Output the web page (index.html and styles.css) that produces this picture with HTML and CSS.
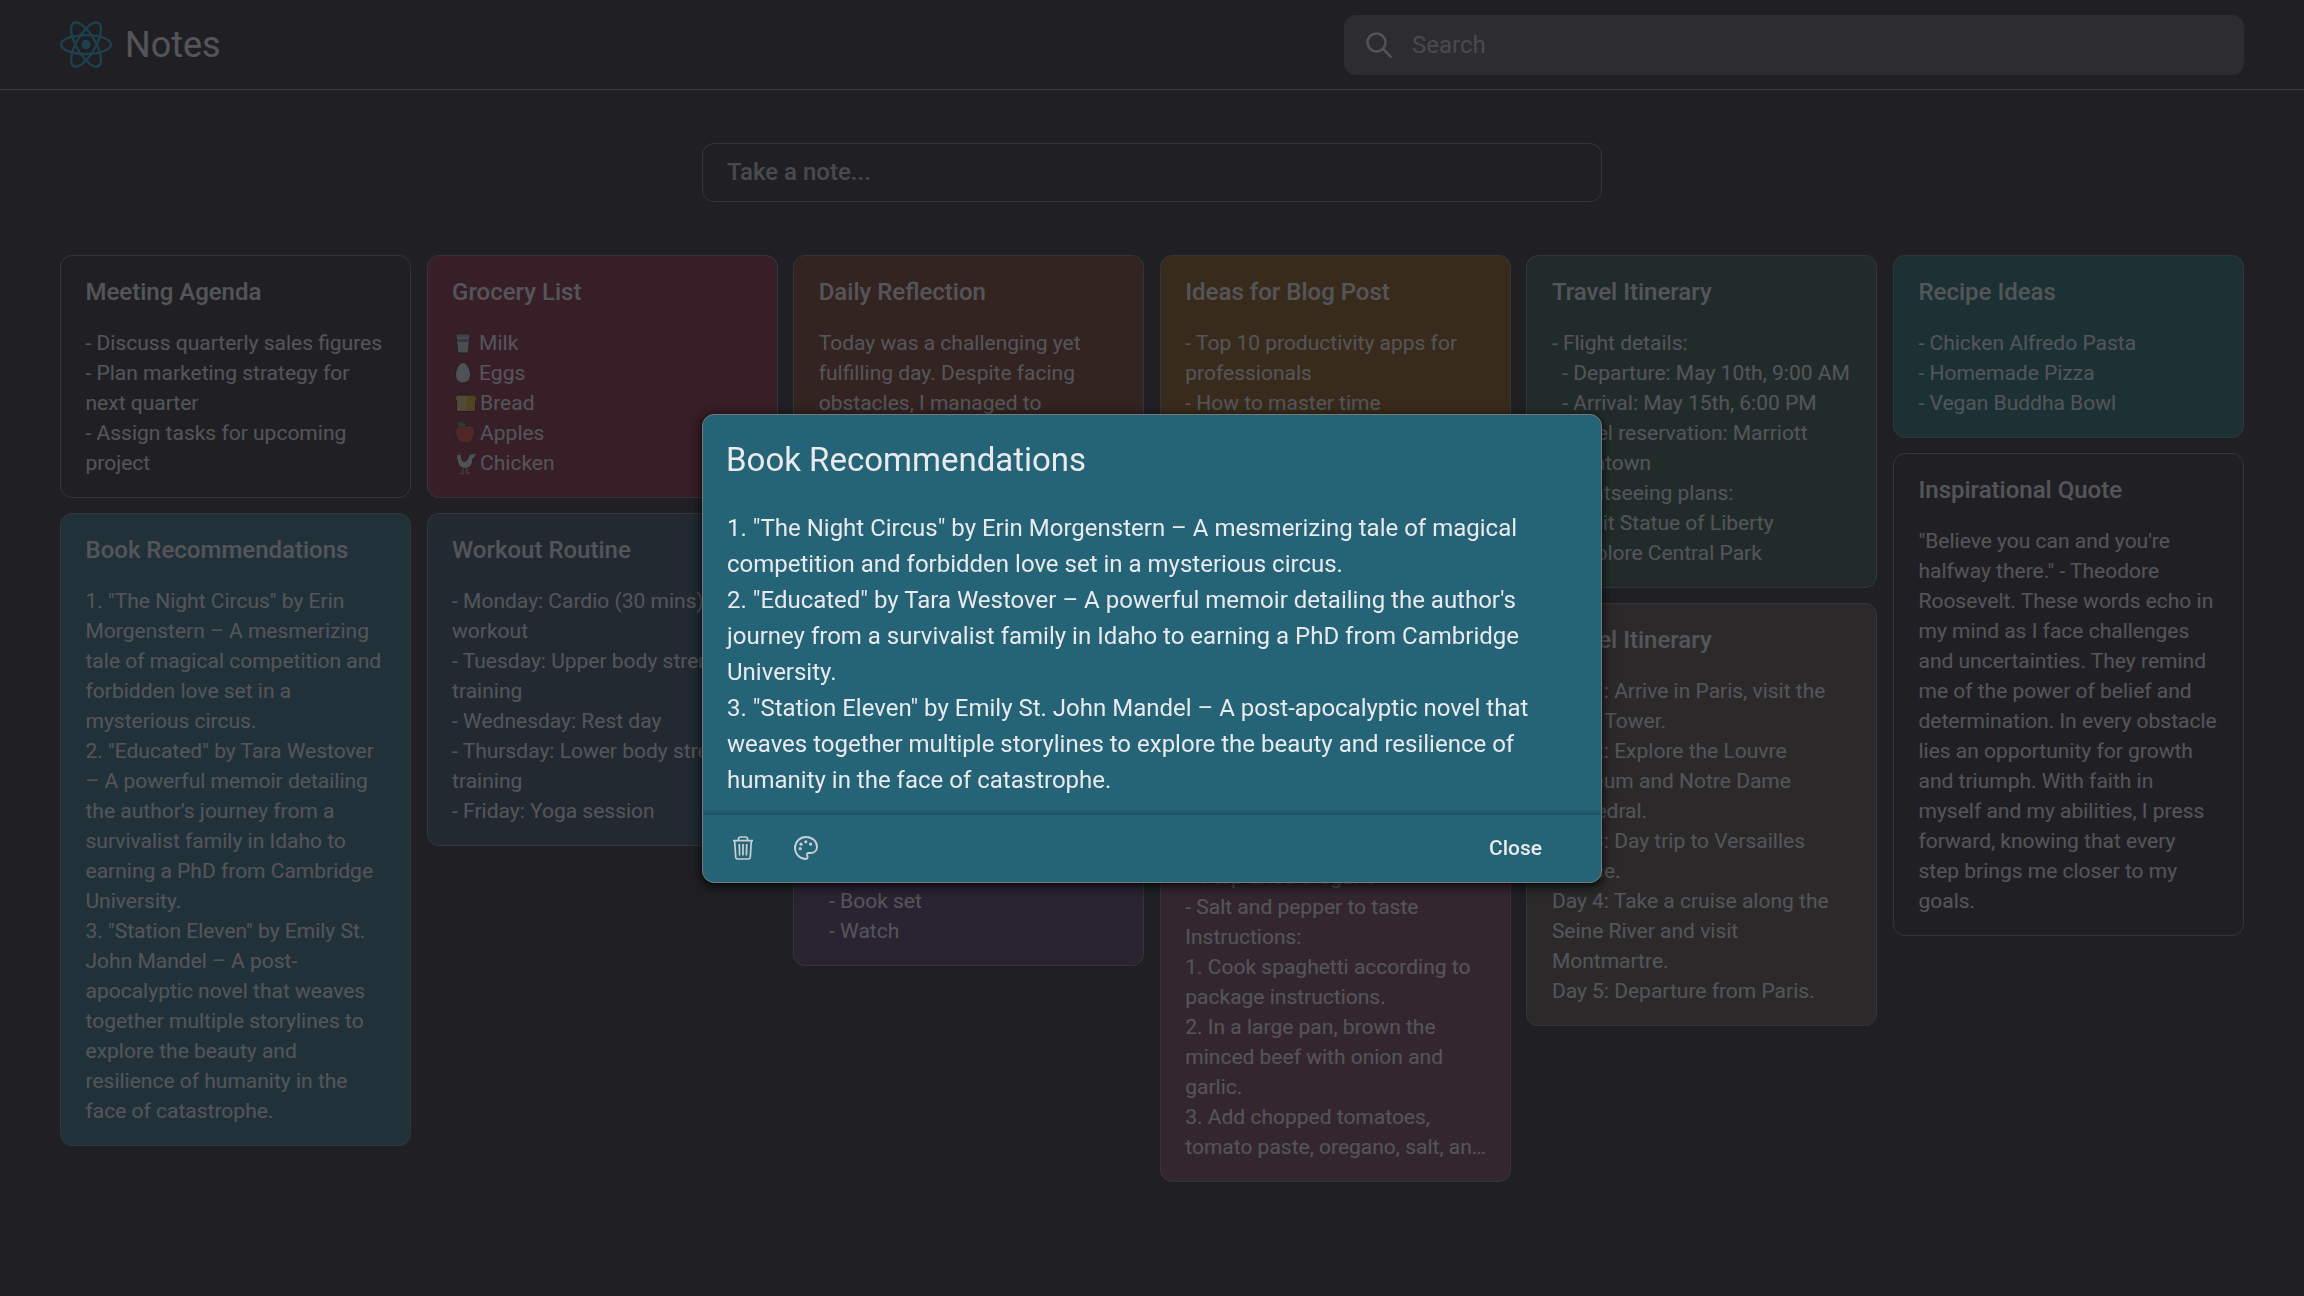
FILE: index.html
```html
<!DOCTYPE html>
<html lang="en">
<head>
<meta charset="utf-8">
<title>Notes</title>
<link rel="stylesheet" href="styles.css">
</head>
<body>
<header class="topbar">
  <div class="brand">
    <svg class="logo" viewBox="-11.5 -10.232 23 20.463"><circle r="2.05" fill="#149eca"/><g fill="none" stroke="#149eca"><ellipse rx="11" ry="4.2"/><ellipse rx="11" ry="4.2" transform="rotate(60)"/><ellipse rx="11" ry="4.2" transform="rotate(120)"/></g></svg>
    <h1 class="brand-name">Notes</h1>
  </div>
  <div class="search">
    <svg class="search-icon" viewBox="0 0 36 36" fill="none" stroke="currentColor" stroke-width="2.4"><circle cx="15.500" cy="15.500" r="9"/><path d="M22 22l8.500 8.500"/></svg>
    <span>Search</span>
  </div>
</header>
<main class="page">
  <div class="composer">Take a note...</div>
  <div class="board">
    <div class="column">
      <article class="note"><h2>Meeting Agenda</h2><p>- Discuss quarterly sales figures
- Plan marketing strategy for next quarter
- Assign tasks for upcoming project</p></article>
      <article class="note fog"><h2>Book Recommendations</h2><p>1. "The Night Circus" by Erin Morgenstern – A mesmerizing tale of magical competition and forbidden love set in a mysterious circus.
2. "Educated" by Tara Westover – A powerful memoir detailing the author's journey from a survivalist family in Idaho to earning a PhD from Cambridge University.
3. "Station Eleven" by Emily St. John Mandel – A post-apocalyptic novel that weaves together multiple storylines to explore the beauty and resilience of humanity in the face of catastrophe.</p></article>
    </div>
    <div class="column">
      <article class="note coral"><h2>Grocery List</h2><p><svg class="food narrow" viewBox="0 0 27 24"><path d="M4 3h14l-1.500 17q-.2 2-2 2h-7q-1.800 0-2-2z" fill="#c9cdd0" stroke="#222" stroke-width="1"/><path d="M5 8h12l-.3 3H5.300z" fill="#777d82"/><path d="M4.500 4h13l-.2 2.500H4.700z" fill="#9ba1a5"/></svg>Milk
<svg class="food narrow" viewBox="0 0 27 24"><path d="M11 1.500c4 0 7.500 7 7.500 12.500 0 5-3.500 8-7.500 8s-7.500-3-7.500-8C3.500 8.500 7 1.500 11 1.500z" fill="#d6dadc" stroke="#222" stroke-width="1"/></svg>Eggs
<svg class="food" viewBox="0 0 28 24"><path d="M5.500 4h16q3 0 3 3.500 0 2-1 3v8.500q0 1.500-1.500 1.500H6q-1.500 0-1.500-1.500v-9q-1-1-1-2.500Q3.500 4 5.500 4z" fill="#d9a514" stroke="#222" stroke-width="1"/><path d="M5.500 5h8q2 0 2 2.500 0 2-1 3v9H5.500V10q-1-1-1-2.500Q4.500 5 5.500 5z" fill="#e2c56e"/></svg>Bread
<svg class="food" viewBox="0 0 28 24"><path d="M13 5.500c4-2.500 10-1 10 5.500 0 5-4 11-7 11-1.500 0-2-.5-3-.5s-2 .5-3 .5c-3 0-6.500-6-6.500-11 0-6.500 5.500-8 9.500-5.500z" fill="#d63b26" stroke="#222" stroke-width="1"/><path d="M5 1.500c5-1.500 8 0 8.500 4-4.500 1-7.500 0-8.500-4z" fill="#2f9b3c"/></svg>Apples
<svg class="food" viewBox="0 0 28 24"><path d="M5 3l4 .5 1.500 6.500c3 1.500 5-1 6-4.500 1-3 5-3.500 8.500-2.500-2 1-2.500 2-2 4l-2.500 1c1 5-3 9.500-7.500 9.500-5 0-7.500-4-7.500-8.500L4.500 7z" fill="#d6dadc" stroke="#222" stroke-width="1"/><path d="M5.500 2.500q2-1.800 3.500.8M4.500 7.500l-1.500-1" fill="none" stroke="#c33" stroke-width="1.500"/><path d="M11 17.500v5H8M15 17l-.5 5h3" fill="none" stroke="#b08a3c" stroke-width="1.500"/></svg>Chicken</p></article>
      <article class="note storm"><h2>Workout Routine</h2><p>- Monday: Cardio (30 mins), abs workout
- Tuesday: Upper body strength training
- Wednesday: Rest day
- Thursday: Lower body strength training
- Friday: Yoga session</p></article>
    </div>
    <div class="column">
      <article class="note peach"><h2>Daily Reflection</h2><p>Today was a challenging yet fulfilling day. Despite facing obstacles, I managed to
complete my tasks on time.
I learned to stay patient
and to ask for help early.
Tomorrow I will begin with
the hardest item first.
I am grateful for my team
and for a quiet evening.</p></article>
      <article class="note dusk"><h2>Gift Ideas</h2><p>- Mom:
  - Scarf
  - Candles
- Dad:
  - Wallet
  - Book set
  - Watch</p></article>
    </div>
    <div class="column">
      <article class="note sand"><h2>Ideas for Blog Post</h2><p>- Top 10 productivity apps for professionals
- How to master time management
- Healthy habits</p></article>
      <article class="note blossom"><h2>Recipe: Classic Spaghetti Bolognese</h2><p>Ingredients:
- Spaghetti
- Minced beef
- 1 onion
- 2 cloves of garlic
- Chopped tomatoes
- Tomato paste
- Olive oil
- 1 tsp dried oregano
- Salt and pepper to taste
Instructions:
1. Cook spaghetti according to package instructions.
2. In a large pan, brown the minced beef with onion and garlic.
3. Add chopped tomatoes, <span class="last-line">tomato paste, oregano, salt, an…</span></p></article>
    </div>
    <div class="column">
      <article class="note mint"><h2>Travel Itinerary</h2><p>- Flight details:
  - Departure: May 10th, 9:00 AM
  - Arrival: May 15th, 6:00 PM
- Hotel reservation: Marriott Downtown
- Sightseeing plans:
  - Visit Statue of Liberty
  - Explore Central Park</p></article>
      <article class="note clay"><h2>Travel Itinerary</h2><p>Day 1: Arrive in Paris, visit the Eiffel Tower.
Day 2: Explore the Louvre Museum and Notre Dame Cathedral.
Day 3: Day trip to Versailles Palace.
Day 4: Take a cruise along the Seine River and visit Montmartre.
Day 5: Departure from Paris.</p></article>
    </div>
    <div class="column">
      <article class="note sage"><h2>Recipe Ideas</h2><p>- Chicken Alfredo Pasta
- Homemade Pizza
- Vegan Buddha Bowl</p></article>
      <article class="note"><h2>Inspirational Quote</h2><p>"Believe you can and you're halfway there." - Theodore Roosevelt. These words echo in my mind as I face challenges and uncertainties. They remind me of the power of belief and determination. In every obstacle lies an opportunity for growth and triumph. With faith in myself and my abilities, I press forward, knowing that every step brings me closer to my goals.</p></article>
    </div>
  </div>
</main>
<div class="overlay">
  <section class="dialog fog">
    <h2 class="dialog-title">Book Recommendations</h2>
    <p class="dialog-text">1. "The Night Circus" by Erin Morgenstern – A mesmerizing tale of magical competition and forbidden love set in a mysterious circus.
2. "Educated" by Tara Westover – A powerful memoir detailing the author's journey from a survivalist family in Idaho to earning a PhD from Cambridge University.
3. "Station Eleven" by Emily St. John Mandel – A post-apocalyptic novel that weaves together multiple storylines to explore the beauty and resilience of humanity in the face of catastrophe.</p>
    <footer class="dialog-bar">
      <svg class="tool" viewBox="0 0 24 24" fill="none" stroke="currentColor" stroke-width="1.700"><path d="M2 4.700h20M7.500 4.500V3q0-2 2-2h5q2 0 2 2v1.500M3.700 5.500l1 15.500q.2 2 1.900 2h10.800q1.700 0 1.900-2l1-15.500M8.300 8l.3 11.500M12 8v11.500M15.700 8l-.3 11.500"/></svg>
      <svg class="tool" viewBox="0 0 24 24"><path d="M11.800 23C5.500 22.700 1 17.800 1 12 1 5.900 5.900 1 12 1s11 4.300 11 9.700c0 4-3 6.300-6.300 6.300h-2.200c-1.400 0-1.900 1-1.400 2.200.7 1.500.8 3.500-1.300 3.800z" fill="none" stroke="currentColor" stroke-width="1.900" stroke-linejoin="round"/><g fill="currentColor"><circle cx="6.200" cy="12.700" r="1.600"/><circle cx="7" cy="8.200" r="1.600"/><circle cx="11.800" cy="5.800" r="1.600"/><circle cx="16.600" cy="8.100" r="1.600"/></g></svg>
      <button class="close">Close</button>
    </footer>
  </section>
</div>
</body>
</html>
```
FILE: styles.css
```css
* { box-sizing: border-box; }
body { margin: 0; height: 1296px; overflow: hidden; background: #202124; color: #e8eaed; font-family: Roboto, sans-serif; }
h1, h2, p { margin: 0; }
.topbar { height: 90px; padding: 0 60px; display: flex; align-items: center; justify-content: space-between; border-bottom: 1px solid #7b7f84; }
.brand { display: flex; align-items: center; gap: 13px; }
.logo { width: 52px; height: 47px; }
.brand-name { font-size: 36px; font-weight: 400; line-height: 48px; }
.search { width: 900px; height: 60px; padding: 0 17px; display: flex; align-items: center; gap: 15px; background: #525355; border-radius: 12px; font-size: 24px; color: #bdc1c6; }
.search-icon { width: 36px; height: 36px; color: #e8eaed; }
.page { padding: 53px 60px 0; }
.composer { width: 900px; height: 59px; margin: 0 auto 53px; padding-left: 24px; border: 1px solid #6c7075; border-radius: 12px; font-size: 24px; font-weight: 500; line-height: 57px; color: #bdc1c6; }
.board { display: grid; grid-template-columns: repeat(6, 351px); justify-content: space-between; align-items: start; }
.column { display: grid; gap: 15px; min-width: 0; }
.note { padding: 18px 24px 19px 24.5px; border: 1px solid #6c7075; border-radius: 12px; }
.note h2 { margin-bottom: 18px; font-size: 24px; font-weight: 500; line-height: 36px; }
.note p { font-size: 21px; line-height: 30px; white-space: pre-wrap; }
.food { width: 28px; height: 24px; vertical-align: -5px; }
.food.narrow { width: 27px; }
.last-line { display: inline-block; white-space: nowrap; vertical-align: top; margin-right: -12px; }
.coral { background: #77172e; }
.peach { background: #692b17; }
.sand { background: #7c4a03; }
.mint { background: #264d3b; }
.sage { background: #0c625d; }
.fog { background: #256377; }
.storm { background: #284255; }
.dusk { background: #472e5b; }
.blossom { background: #6c394f; }
.clay { background: #4b443a; }
.overlay { position: fixed; inset: 0; display: flex; align-items: center; justify-content: center; background: rgba(32, 33, 36, .74); }
.dialog { width: 900px; height: 469px; border: 1px solid #747a7e; border-radius: 12px; overflow: hidden; display: flex; flex-direction: column; box-shadow: 0 2px 6px rgba(0, 0, 0, .6), 0 4px 12px 3px rgba(0, 0, 0, .3); }
.dialog-title { padding: 24px 23px 0; font-size: 33px; font-weight: 400; line-height: 42px; }
.dialog-text { flex: 1; padding: 29px 24px 0; font-size: 24px; line-height: 36px; white-space: pre-wrap; }
.dialog-bar { height: 67px; padding: 0 59px 1px 28px; display: flex; align-items: center; gap: 39px; color: #c9cfd3; box-shadow: 0 -2px 4px rgba(0, 0, 0, .25); }
.tool { width: 24px; height: 24px; }
.close { margin-left: auto; padding: 0; border: 0; background: none; color: #e8eaed; font: 500 21px/30px Roboto, sans-serif; }
```
